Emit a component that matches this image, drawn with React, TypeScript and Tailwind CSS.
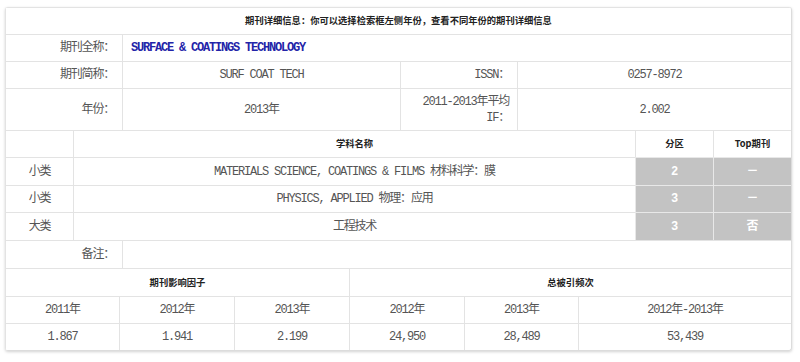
import React from 'react';

const font = {
  fontFamily: '"Liberation Mono", "Noto Sans CJK SC", monospace',
};
const cjk = { fontFamily: '"Noto Sans CJK SC", sans-serif' };

const base =
  'border-t border-l border-[#e3e3e3] flex items-center px-2 text-[12px] tracking-[-1.2px]';
const cell = base + ' justify-center text-[#555]';
const label = base + ' justify-end text-right text-[#555]';
const title = base + ' justify-start font-bold text-[#2323a8]';
const head =
  'border-t border-l border-[#e3e3e3] flex items-center justify-center text-[9.3px] font-bold text-[#222]';
const gray =
  'border-t border-l border-[#e8e8e8] bg-[#c3c3c3] flex items-center justify-center text-[12px] text-white font-bold';

export default function App() {
  return (
    <div className="w-[800px] h-[362px] bg-white pt-[7px] pl-[5px]" style={font}>
      <div className="w-[787px] border-r border-b border-[#dcdcdc] rounded-[3px] shadow-[0_1px_3px_rgba(0,0,0,0.18)] overflow-hidden">
        {/* journal info */}
        <div className="grid grid-cols-[117px_278px_117px_1fr]">
          <div className={head + ' col-span-4 h-[27px]'} style={cjk}>
            期刊详细信息：你可以选择检索框左侧年份，查看不同年份的期刊详细信息
          </div>

          <div className={label + ' h-[27px]'}>期刊全称：</div>
          <div className={title + ' col-span-3'}>SURFACE &amp; COATINGS TECHNOLOGY</div>

          <div className={label + ' h-[27px]'}>期刊简称：</div>
          <div className={cell}>SURF COAT TECH</div>
          <div className={label}>ISSN：</div>
          <div className={cell}>0257-8972</div>

          <div className={label + ' h-[42px]'}>年份：</div>
          <div className={cell}>2013年</div>
          <div className={label + ' leading-[16px]'}>
            <span>
              2011-2013年平均
              <br />
              IF：
            </span>
          </div>
          <div className={cell}>2.002</div>
        </div>

        {/* subject categories */}
        <div className="grid grid-cols-[68px_562px_78px_1fr]">
          <div className={head + ' h-[27px]'}></div>
          <div className={head} style={cjk}>学科名称</div>
          <div className={head} style={cjk}>分区</div>
          <div className={head} style={cjk}>Top期刊</div>

          <div className={cell + ' h-[28px]'}>小类</div>
          <div className={cell}>MATERIALS SCIENCE, COATINGS &amp; FILMS 材料科学：膜</div>
          <div className={gray}>2</div>
          <div className={gray}>－</div>

          <div className={cell + ' h-[27px]'}>小类</div>
          <div className={cell}>PHYSICS, APPLIED 物理：应用</div>
          <div className={gray}>3</div>
          <div className={gray}>－</div>

          <div className={cell + ' h-[28px]'}>大类</div>
          <div className={cell}>工程技术</div>
          <div className={gray}>3</div>
          <div className={gray}>否</div>
        </div>

        {/* remarks */}
        <div className="grid grid-cols-[117px_1fr]">
          <div className={label + ' h-[28px]'}>备注：</div>
          <div className={cell}></div>
        </div>

        {/* impact factor & citations */}
        <div className="grid grid-cols-[114px_115px_115px_115px_114px_1fr]">
          <div className={head + ' col-span-3 h-[28px]'} style={cjk}>
            期刊影响因子
          </div>
          <div className={head + ' col-span-3'} style={cjk}>
            总被引频次
          </div>

          <div className={cell + ' h-[27px]'}>2011年</div>
          <div className={cell}>2012年</div>
          <div className={cell}>2013年</div>
          <div className={cell}>2012年</div>
          <div className={cell}>2013年</div>
          <div className={cell}>2012年-2013年</div>

          <div className={cell + ' h-[27px]'}>1.867</div>
          <div className={cell}>1.941</div>
          <div className={cell}>2.199</div>
          <div className={cell}>24,950</div>
          <div className={cell}>28,489</div>
          <div className={cell}>53,439</div>
        </div>
      </div>
    </div>
  );
}
